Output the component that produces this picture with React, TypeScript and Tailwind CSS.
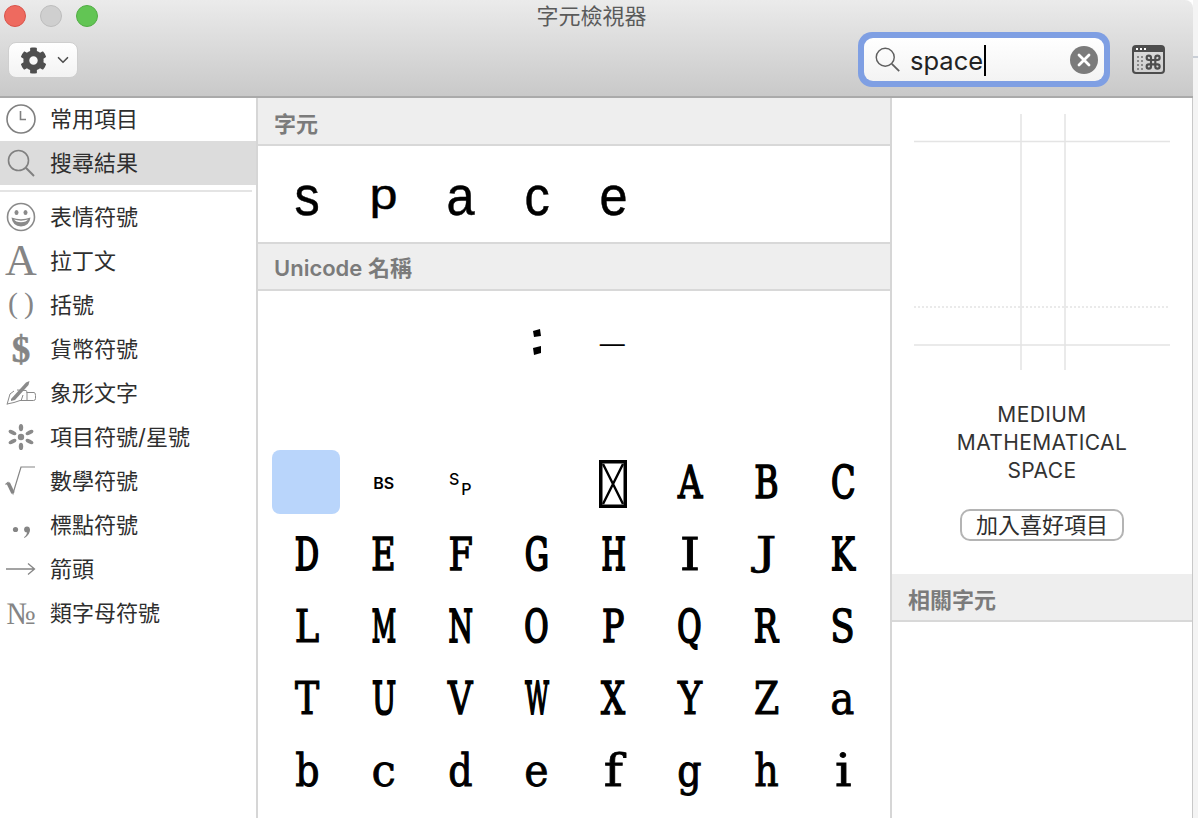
import React from "react";
import { FaCog } from "react-icons/fa";
import { ChevronDown } from "lucide-react";

const cjk = "font-['Inter','Noto_Sans_CJK_TC',sans-serif]";

function Mag({ size = 30, color = "#808080" }: { size?: number; color?: string }) {
  return (
    <svg width={size} height={size} viewBox="0 0 30 30" fill="none" stroke={color}>
      <circle cx="12.5" cy="12.5" r="10" strokeWidth="1.6" />
      <path d="M19.8 19.8 28 28" strokeWidth="2" />
    </svg>
  );
}

const IconClock = () => (
  <svg width="30" height="30" viewBox="0 0 30 30" fill="none" stroke="#808080">
    <circle cx="15" cy="15" r="14" strokeWidth="1.6" />
    <path d="M20 15.5h-5.5V7" strokeWidth="1.6" />
  </svg>
);
const IconSmile = () => (
  <svg width="30" height="30" viewBox="0 0 30 30" fill="none" stroke="#8a8a8a">
    <circle cx="15" cy="15" r="13.5" strokeWidth="1.6" />
    <ellipse cx="10.5" cy="10.5" rx="2" ry="2.6" fill="#8a8a8a" stroke="none" />
    <ellipse cx="19.5" cy="10.5" rx="2" ry="2.6" fill="#8a8a8a" stroke="none" />
    <path d="M5.5 15.5Q15 19 24.5 15.5 23.5 24 15 24.5 6.5 24 5.5 15.5Z" fill="#8a8a8a" stroke="none" />
    <path d="M8 17.5Q15 19.8 22 17.5 20.5 20 15 20.2 9.5 20 8 17.5Z" fill="#fff" stroke="none" />
  </svg>
);
const IconHand = () => (
  <svg width="30" height="26" viewBox="0 0 30 26" fill="none" stroke="#8a8a8a" strokeWidth="1">
    <path d="M1 24.5 4 14l4-3" />
    <path d="M11 10 20 10.5q1.5 .5 .5 2H28q1.5 0 1.5 3v3q0 2-2 2H14l-6 2-7 1.5" />
    <path d="M5 19 20 2.5 23.5 1 22.5 5 9 20l-4 1z" fill="#8a8a8a" stroke="none" />
    <path d="M15 21l2-6M21 13v7" />
  </svg>
);
const IconBullet = () => (
  <svg width="26" height="26" viewBox="0 0 26 26" fill="#8a8a8a">
    <circle cx="13" cy="13" r="3.2" />
    <ellipse cx="13" cy="3.6" rx="2.2" ry="3.6" />
    <ellipse cx="13" cy="22.4" rx="2.2" ry="3.6" />
    <ellipse cx="4.5" cy="8.5" rx="4.2" ry="2" transform="rotate(25 4.5 8.5)" />
    <ellipse cx="21.5" cy="8.5" rx="4.2" ry="2" transform="rotate(-25 21.5 8.5)" />
    <ellipse cx="4.5" cy="17.5" rx="4.2" ry="2" transform="rotate(-25 4.5 17.5)" />
    <ellipse cx="21.5" cy="17.5" rx="4.2" ry="2" transform="rotate(25 21.5 17.5)" />
  </svg>
);
const IconRoot = () => (
  <svg width="32" height="30" viewBox="0 0 32 30" fill="none" stroke="#858585">
    <path d="M0.5 18.5 3 16.5 8 27.5 16 1H30" strokeWidth="1.2" />
    <path d="M3.2 17 8 27" strokeWidth="3.6" />
  </svg>
);
const IconPunct = () => (
  <svg width="24" height="26" viewBox="0 0 24 26" fill="#858585">
    <circle cx="6.5" cy="17.5" r="2.6" />
    <circle cx="18" cy="17.5" r="2.9" />
    <path d="M18.5 16 20.9 17.5Q21 23 15.5 26L15 25.3Q18.3 22.8 18 19.5z" />
  </svg>
);
const IconArrow = () => (
  <svg width="30" height="14" viewBox="0 0 30 14" fill="none" stroke="#858585" strokeWidth="1.3">
    <path d="M0 7H28M22 1.5 28.5 7 22 12.5" />
  </svg>
);

function SideText({ cls, children }: { cls: string; children: React.ReactNode }) {
  return <span className={"font-['Liberation_Serif',serif] text-[#858585] leading-none " + cls}>{children}</span>;
}

const rows: [React.ReactNode, string][] = [
  [<IconSmile />, "表情符號"],
  [<SideText cls="text-[44px] font-normal">A</SideText>, "拉丁文"],
  [<SideText cls="text-[30px] tracking-[6px] pl-[6px] -translate-y-[2px]">()</SideText>, "括號"],
  [<SideText cls="text-[37px] font-bold [-webkit-text-stroke:0.6px_#858585]">$</SideText>, "貨幣符號"],
  [<IconHand />, "象形文字"],
  [<IconBullet />, "項目符號/星號"],
  [<IconRoot />, "數學符號"],
  [<IconPunct />, "標點符號"],
  [<IconArrow />, "箭頭"],
  [<SideText cls="text-[31px]">№</SideText>, "類字母符號"],
];

function SideRow({ icon, label, active, cls = "h-11" }: { icon: React.ReactNode; label: string; active?: boolean; cls?: string }) {
  return (
    <div className={"flex items-center " + cls + " " + (active ? "bg-[#dcdcdc]" : "")}>
      <div className="w-[42px] flex justify-center items-center shrink-0">{icon}</div>
      <span className="ml-2 text-[22px] leading-none text-[#2e2e2e]">{label}</span>
    </div>
  );
}

function Header({ cls, children }: { cls: string; children: React.ReactNode }) {
  return (
    <div className={"shrink-0 bg-[#eeeeee] border-b-2 border-[#d8d8d8] flex items-center px-4 text-[22px] leading-none font-semibold text-[#7b7b7b] " + cls}>
      {children}
    </div>
  );
}

const letters = "DEFGHIJKLMNOPQRSTUVWXYZabcdefghi".split("");

// approximate natural ink widths of the serif face, used to even the letters out to a monospaced look
const natural: Record<string, number> = {
  A: 0.72, B: 0.73, C: 0.76, D: 0.8, E: 0.73, F: 0.69, G: 0.8, H: 0.87, I: 0.4, J: 0.4, K: 0.75, L: 0.66, M: 1.02,
  N: 0.87, O: 0.82, P: 0.73, Q: 0.82, R: 0.75, S: 0.68, T: 0.67, U: 0.85, V: 0.72, W: 1.06, X: 0.72, Y: 0.67, Z: 0.67,
  a: 0.6, b: 0.64, c: 0.56, d: 0.64, e: 0.59, f: 0.37, g: 0.64, h: 0.64, i: 0.32,
};

function Slab({ c }: { c: string }) {
  const sx = Math.min(1.15, 0.54 / (natural[c] ?? 0.7));
  const stroke = Math.max(0.8, Math.min(2.2, 3.9 / sx - 3.6));
  const vertical = c === "J" ? "translateY(-3px) scaleY(0.85) " : "";
  return (
    <div className="h-[72px] flex items-center justify-center">
      <span
        className="inline-block -mt-[2px] font-['DejaVu_Serif',serif] text-[45px] leading-none text-black"
        style={{ transform: `${vertical}scaleX(${sx})`, WebkitTextStroke: `${stroke}px black` }}
      >
        {c}
      </span>
    </div>
  );
}

export default function App() {
  return (
    <div className={"w-[1198px] h-[818px] overflow-hidden flex bg-[#f4f4f4] " + cjk}>
      <div className="w-[1193px] shrink-0 flex flex-col bg-white">
        <div className="h-[98px] shrink-0 flex flex-col rounded-tr-lg bg-gradient-to-b from-[#ebebeb] to-[#c9c9c9] border-b-2 border-[#aaaaaa]">
          <div className="h-8 shrink-0 grid grid-cols-[1fr_auto_1fr] items-center pr-[10px]">
            <div className="flex gap-[14px] pl-[4px]">
              <div className="w-[22px] h-[22px] rounded-full bg-[#ee6a5f] border border-[#d9534a]" />
              <div className="w-[22px] h-[22px] rounded-full bg-[#cfcfcf] border border-[#bdbdbd]" />
              <div className="w-[22px] h-[22px] rounded-full bg-[#62c554] border border-[#52ad45]" />
            </div>
            <div className="text-[22px] leading-none text-[#5a5a5a]">字元檢視器</div>
            <div />
          </div>
          <div className="flex items-center h-[55px] pl-2">
            <div className="w-[70px] h-9 mt-[1px] rounded-lg bg-gradient-to-b from-white to-[#f3f3f3] border border-[#cfcfcf] flex items-center pl-[11px] gap-[7px]">
              <FaCog size={27} color="#4f4f4f" />
              <ChevronDown size={18} color="#4f4f4f" strokeWidth={2.2} />
            </div>
            <div className="ml-auto w-[252px] h-[55px] rounded-[14px] bg-[#7f9fe3] p-[6px]">
              <div className="h-full rounded-[9px] bg-gradient-to-b from-white to-[#f3f3f3] flex items-center pl-[10px] pr-[6px]">
                <Mag size={27} color="#5f5f5f" />
                <span className="ml-[9px] translate-y-px text-[25.5px] leading-none text-[#222222]">space</span>
                <span className="w-[2px] h-[31px] bg-black ml-[1px] translate-y-px" />
                <div className="ml-auto w-7 h-7 rounded-full bg-[#7b7b7b] flex items-center justify-center">
                  <svg width="14" height="14" viewBox="0 0 14 14" stroke="#fff" strokeWidth="2.8" strokeLinecap="round">
                    <path d="M2 2 12 12M12 2 2 12" />
                  </svg>
                </div>
              </div>
            </div>
            <div className="w-[83px] pr-[6px] flex justify-center">
              <svg width="33" height="29" viewBox="0 0 33 29" fill="none">
                <rect x="1" y="1" width="31" height="27" rx="3" stroke="#4d4d4d" strokeWidth="2" />
                <path d="M1 7V4a3 3 0 0 1 3-3h25a3 3 0 0 1 3 3v3z" fill="#4d4d4d" />
                <g fill="#fff">
                  <rect x="4" y="3" width="2" height="2" />
                  <rect x="8" y="3" width="2" height="2" />
                  <rect x="12" y="3" width="2" height="2" />
                </g>
                <g fill="#8a8a8a">
                  {[11, 15, 19, 23].map((y) =>
                    [5, 9].map((x) => <rect key={x + "-" + y} x={x} y={y} width="2" height="2" />)
                  )}
                </g>
                <g transform="translate(12.5 8.5) scale(0.72)">
                  <path d="M15 6v12a3 3 0 1 0 3-3H6a3 3 0 1 0 3 3V6a3 3 0 1 0-3 3h12a3 3 0 1 0-3-3" stroke="#4d4d4d" strokeWidth="3" />
                </g>
              </svg>
            </div>
          </div>
        </div>

        <div className="flex flex-1 min-h-0">
          <div className="w-[258px] shrink-0 border-r-2 border-[#d6d6d6]">
            <SideRow icon={<IconClock />} label="常用項目" cls="h-[43px] pb-[2px]" />
            <SideRow icon={<Mag />} label="搜尋結果" active />
            <div className="h-[10px] pt-[5px] pr-1">
              <div className="h-[2px] bg-[#e4e4e4]" />
            </div>
            {rows.map(([icon, label]) => (
              <SideRow key={label} icon={icon} label={label} />
            ))}
          </div>

          <div className="w-[634px] shrink-0 border-r-2 border-[#d6d6d6] flex flex-col">
            <Header cls="h-[48px] pt-[6px]">字元</Header>
            <div className="h-[98px] shrink-0 border-b-2 border-[#d8d8d8] grid grid-cols-[repeat(8,76.5px)] pl-[11px] items-center font-['Liberation_Sans',sans-serif] text-[56px] leading-none text-black [-webkit-text-stroke:0.5px_black]">
              {["s", "p", "a", "c", "e"].map((c) => (
                <div key={c} className="flex justify-center">
                  <span className={"inline-block scale-x-[0.9] " + (c === "p" ? "translate-y-[1px] scale-y-[0.75]" : "translate-y-[2px]")}>{c}</span>
                </div>
              ))}
            </div>
            <Header cls="h-[47px] pt-[3px]">Unicode 名稱</Header>
            <div className="grid grid-cols-[repeat(8,76.5px)] auto-rows-[72px] pl-[11px] pt-3">
              <div /><div /><div />
              <div className="flex items-center justify-center translate-y-[3px]">
                <svg width="10" height="26" viewBox="0 0 10 26" fill="#000">
                  <path d="M1 2 8 0l1 7-7 1zM1 19l8-2 0 7-7 2z" />
                </svg>
              </div>
              <div className="flex items-center justify-center font-['Liberation_Sans',sans-serif] text-[25px] leading-none text-black translate-y-[4px] -translate-x-px">—</div>
              <div /><div /><div />
              {Array.from({ length: 8 }).map((_, i) => <div key={i} />)}

              <div className="flex items-center justify-center">
                <div className="w-[68px] h-16 rounded-lg bg-[#b9d5fb] -translate-x-px -translate-y-px" />
              </div>
              <div className="flex items-center justify-center text-[16px] font-semibold text-black leading-none">BS</div>
              <div className="flex items-center justify-center text-[16px] font-medium text-black leading-none gap-[2px]">
                <span className="-translate-y-[4px]">S</span>
                <span className="translate-y-[6px]">P</span>
              </div>
              <div />
              <div className="flex items-center justify-center translate-y-[1px]">
                <svg width="28" height="48" viewBox="0 0 28 48" fill="none" stroke="#000">
                  <rect x="1.75" y="1.75" width="24.5" height="44.5" strokeWidth="3.5" />
                  <path d="M4 4 24 44M24 4 4 44" strokeWidth="2.4" />
                </svg>
              </div>
              {["A", "B", "C"].map((c) => <Slab key={c} c={c} />)}
              {letters.map((c) => <Slab key={c} c={c} />)}
            </div>
          </div>

          <div className="flex-1 flex flex-col border-r border-[#c8c8c8]">
            <div className="h-[476px] shrink-0 flex flex-col items-center">
              <svg width="300" height="280" viewBox="0 0 300 280" className="shrink-0">
                <g stroke="#e4e4e4" strokeWidth="1.5">
                  <path d="M22 43.5H278M22 247H278M129 16V272M173 16V272" />
                  <path d="M22 209H278" strokeDasharray="2 2" />
                </g>
              </svg>
              <div className="mt-[23px] w-[220px] text-center text-[21px] tracking-[0.4px] leading-[28px] text-[#333333]">
                MEDIUM<br />MATHEMATICAL<br />SPACE
              </div>
              <div className="mt-[24px] w-[164px] h-8 rounded-[10px] border-2 border-[#b4b4b4] flex items-center justify-center text-[22px] leading-none text-[#2e2e2e]">
                加入喜好項目
              </div>
            </div>
            <Header cls="h-[48px] pt-[5px]">相關字元</Header>
          </div>
        </div>
      </div>
      <div className="flex-1">
        <div className="h-[2px] mt-[56px] bg-[#c9ced6]" />
      </div>
    </div>
  );
}
